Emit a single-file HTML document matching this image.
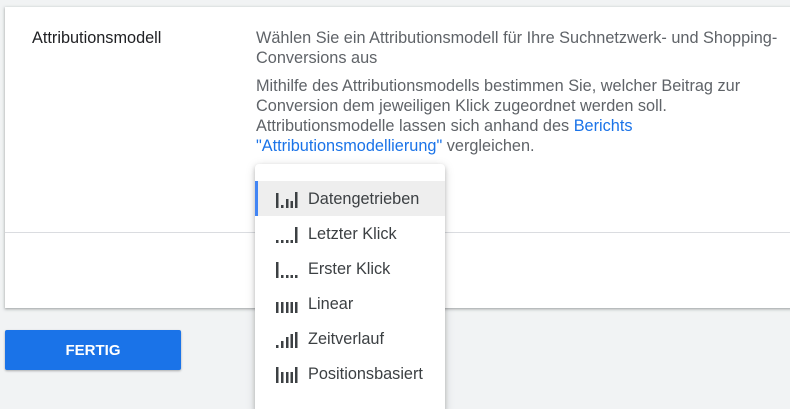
<!DOCTYPE html>
<html style="overflow:hidden"><head><style>
html,body{overflow:hidden;height:409px}
body{margin:0;width:790px;background:#f1f3f4;font-family:"Liberation Sans",Arial,sans-serif;position:relative}
.card{position:absolute;left:5px;top:7px;width:790px;height:301px;background:#fff;box-shadow:0 1px 2px rgba(60,64,67,.3),0 1px 3px 1px rgba(60,64,67,.15)}
.div{position:absolute;left:5px;top:232px;width:790px;height:1px;background:#dadce0}
.lbl{position:absolute;left:32px;top:29px;font-size:16.3px;color:#202124}
.txt{position:absolute;left:256px;top:28px;width:530px;font-size:16.3px;line-height:20px;color:#5f6368}
.txt p{margin:0 0 8px}
a{color:#1a73e8;text-decoration:none}
.btn{position:absolute;left:5px;top:330px;width:176px;height:40px;background:#1a73e8;border-radius:2px;box-shadow:0 1px 2px rgba(0,0,0,.3);color:#fff;font-weight:bold;font-size:15px;text-align:center;line-height:42px}
.menu{position:absolute;left:255px;top:164px;width:190px;height:250px;background:#fff;border-radius:4px;box-shadow:0 2px 4px rgba(0,0,0,.2),0 2px 10px rgba(0,0,0,.15)}
.it{position:absolute;left:0;width:190px;height:35px;font-size:16.3px;color:#3c4043;line-height:37px}
.it svg{position:absolute;left:21px;top:10px}
.it span{position:absolute;left:53px}
.sel{background:#eeeeee;border-left:3px solid #4285f4;left:0;width:187px}
.sel svg{left:18px}.sel span{left:50px}
</style></head><body>
<div class="card"></div><div class="div"></div>
<div class="lbl">Attributionsmodell</div>
<div class="txt"><p>Wählen Sie ein Attributionsmodell für Ihre Suchnetzwerk- und Shopping-Conversions aus</p><p>Mithilfe des Attributionsmodells bestimmen Sie, welcher Beitrag zur Conversion dem jeweiligen Klick zugeordnet werden soll. Attributionsmodelle lassen sich anhand des <a>Berichts "Attributionsmodellierung"</a> vergleichen.</p></div>
<div class="btn">FERTIG</div>
<div class="menu">
<div class="it sel" style="top:17px"><svg width="22" height="17"><g fill="#3c4043"><rect x="0" y="2" width="2.5" height="15"/><rect x="5" y="14" width="2.5" height="3"/><rect x="10" y="8" width="2.5" height="9"/><rect x="14.5" y="10" width="2.5" height="7"/><rect x="19" y="1" width="2.5" height="16"/></g></svg><span>Datengetrieben</span></div>
<div class="it" style="top:52px"><svg width="22" height="17"><g fill="#3c4043"><rect x="0" y="14" width="2.5" height="3"/><rect x="5" y="14" width="2.5" height="3"/><rect x="10" y="14" width="2.5" height="3"/><rect x="14.5" y="14" width="2.5" height="3"/><rect x="19" y="1" width="2.5" height="16"/></g></svg><span>Letzter Klick</span></div>
<div class="it" style="top:87px"><svg width="22" height="17"><g fill="#3c4043"><rect x="0" y="1" width="2.5" height="16"/><rect x="5" y="14" width="2.5" height="3"/><rect x="10" y="14" width="2.5" height="3"/><rect x="14.5" y="14" width="2.5" height="3"/><rect x="19" y="14" width="2.5" height="3"/></g></svg><span>Erster Klick</span></div>
<div class="it" style="top:122px"><svg width="22" height="17"><g fill="#3c4043"><rect x="0" y="6" width="2.5" height="11"/><rect x="5" y="6" width="2.5" height="11"/><rect x="10" y="6" width="2.5" height="11"/><rect x="14.5" y="6" width="2.5" height="11"/><rect x="19" y="6" width="2.5" height="11"/></g></svg><span>Linear</span></div>
<div class="it" style="top:157px"><svg width="22" height="17"><g fill="#3c4043"><rect x="0" y="14" width="2.5" height="3"/><rect x="5" y="10" width="2.5" height="7"/><rect x="10" y="6" width="2.5" height="11"/><rect x="14.5" y="3" width="2.5" height="14"/><rect x="19" y="1" width="2.5" height="16"/></g></svg><span>Zeitverlauf</span></div>
<div class="it" style="top:192px"><svg width="22" height="17"><g fill="#3c4043"><rect x="0" y="1" width="2.5" height="16"/><rect x="5" y="6" width="2.5" height="11"/><rect x="10" y="6" width="2.5" height="11"/><rect x="14.5" y="6" width="2.5" height="11"/><rect x="19" y="1" width="2.5" height="16"/></g></svg><span>Positionsbasiert</span></div>
</div>
</body></html>
